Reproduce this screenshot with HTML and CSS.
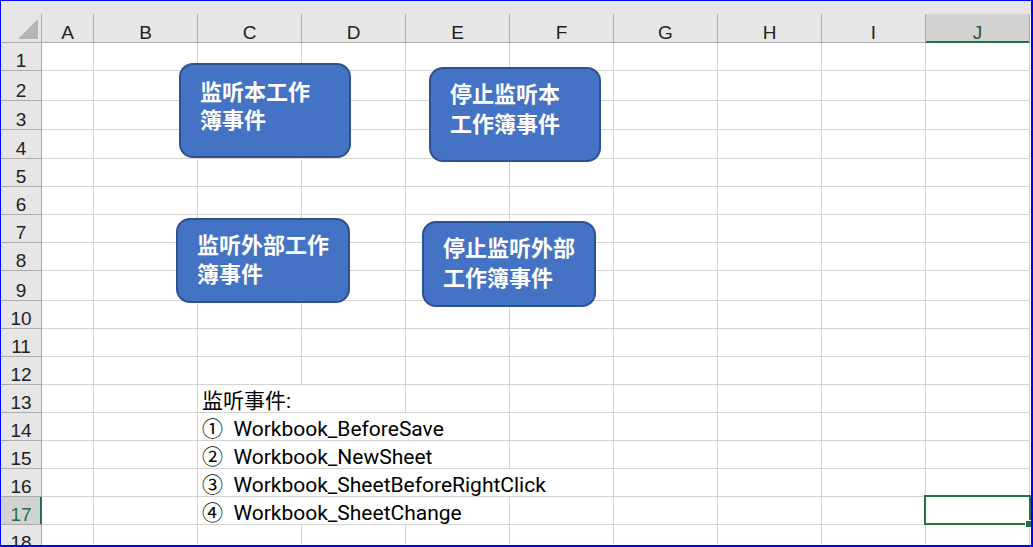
FILE: index.html
```html
<!DOCTYPE html>
<html lang="zh">
<head>
<meta charset="utf-8">
<title>Sheet</title>
<link rel="stylesheet" href="styles.css">
</head>
<body>
<div class="frame">
  <div class="sheet">
    <div class="strip"></div>
    <div class="grid">
      <div class="corner"><svg class="tri" width="20" height="20" viewBox="0 0 20 20"><polygon points="20,0 20,20 0,20" fill="#b4b4b4"/></svg></div>
      <div class="ch">A</div><div class="ch">B</div><div class="ch">C</div><div class="ch">D</div><div class="ch">E</div><div class="ch">F</div><div class="ch">G</div><div class="ch">H</div><div class="ch">I</div><div class="ch sel">J</div>

      <div class="rh">1</div><div class="c"></div><div class="c"></div><div class="c"></div><div class="c"></div><div class="c"></div><div class="c"></div><div class="c"></div><div class="c"></div><div class="c"></div><div class="c"></div>
      <div class="rh">2</div><div class="c"></div><div class="c"></div><div class="c"></div><div class="c"></div><div class="c"></div><div class="c"></div><div class="c"></div><div class="c"></div><div class="c"></div><div class="c"></div>
      <div class="rh">3</div><div class="c"></div><div class="c"></div><div class="c"></div><div class="c"></div><div class="c"></div><div class="c"></div><div class="c"></div><div class="c"></div><div class="c"></div><div class="c"></div>
      <div class="rh">4</div><div class="c"></div><div class="c"></div><div class="c"></div><div class="c"></div><div class="c"></div><div class="c"></div><div class="c"></div><div class="c"></div><div class="c"></div><div class="c"></div>
      <div class="rh">5</div><div class="c"></div><div class="c"></div><div class="c"></div><div class="c"></div><div class="c"></div><div class="c"></div><div class="c"></div><div class="c"></div><div class="c"></div><div class="c"></div>
      <div class="rh">6</div><div class="c"></div><div class="c"></div><div class="c"></div><div class="c"></div><div class="c"></div><div class="c"></div><div class="c"></div><div class="c"></div><div class="c"></div><div class="c"></div>
      <div class="rh">7</div><div class="c"></div><div class="c"></div><div class="c"></div><div class="c"></div><div class="c"></div><div class="c"></div><div class="c"></div><div class="c"></div><div class="c"></div><div class="c"></div>
      <div class="rh">8</div><div class="c"></div><div class="c"></div><div class="c"></div><div class="c"></div><div class="c"></div><div class="c"></div><div class="c"></div><div class="c"></div><div class="c"></div><div class="c"></div>
      <div class="rh">9</div><div class="c"></div><div class="c"></div><div class="c"></div><div class="c"></div><div class="c"></div><div class="c"></div><div class="c"></div><div class="c"></div><div class="c"></div><div class="c"></div>
      <div class="rh">10</div><div class="c"></div><div class="c"></div><div class="c"></div><div class="c"></div><div class="c"></div><div class="c"></div><div class="c"></div><div class="c"></div><div class="c"></div><div class="c"></div>
      <div class="rh">11</div><div class="c"></div><div class="c"></div><div class="c"></div><div class="c"></div><div class="c"></div><div class="c"></div><div class="c"></div><div class="c"></div><div class="c"></div><div class="c"></div>
      <div class="rh">12</div><div class="c"></div><div class="c"></div><div class="c"></div><div class="c"></div><div class="c"></div><div class="c"></div><div class="c"></div><div class="c"></div><div class="c"></div><div class="c"></div>

      <div class="rh">13</div><div class="c"></div><div class="c"></div><div class="c t span2">监听事件:</div><div class="c"></div><div class="c"></div><div class="c"></div><div class="c"></div><div class="c"></div><div class="c"></div>
      <div class="rh">14</div><div class="c"></div><div class="c"></div><div class="c t span3">①  Workbook_BeforeSave</div><div class="c"></div><div class="c"></div><div class="c"></div><div class="c"></div><div class="c"></div>
      <div class="rh">15</div><div class="c"></div><div class="c"></div><div class="c t span3">②  Workbook_NewSheet</div><div class="c"></div><div class="c"></div><div class="c"></div><div class="c"></div><div class="c"></div>
      <div class="rh">16</div><div class="c"></div><div class="c"></div><div class="c t span4">③  Workbook_SheetBeforeRightClick</div><div class="c"></div><div class="c"></div><div class="c"></div><div class="c"></div>
      <div class="rh sel">17</div><div class="c"></div><div class="c"></div><div class="c t span3">④  Workbook_SheetChange</div><div class="c"></div><div class="c"></div><div class="c"></div><div class="c"></div><div class="c"></div>
      <div class="rh">18</div><div class="c"></div><div class="c"></div><div class="c"></div><div class="c"></div><div class="c"></div><div class="c"></div><div class="c"></div><div class="c"></div><div class="c"></div><div class="c"></div>
    </div>

    <div class="shape s1">监听本工作<br>簿事件</div>
    <div class="shape s2">停止监听本<br>工作簿事件</div>
    <div class="shape s3">监听外部工作<br>簿事件</div>
    <div class="shape s4">停止监听外部<br>工作簿事件</div>

    <div class="selection"><span class="handle"></span></div>
  </div>
</div>
</body>
</html>
```

FILE: styles.css
```css
html, body {
  margin: 0;
  padding: 0;
  background: #ffffff;
}

.frame {
  width: 1033px;
  height: 547px;
  box-sizing: border-box;
  border-style: solid;
  border-color: #0000ff;
  border-width: 1px 2px 2px 1px;
  overflow: hidden;
  background: #ffffff;
}

.sheet {
  position: relative;
  width: 100%;
  height: 100%;
  overflow: hidden;
}

.strip {
  height: 13px;
  background: #e6e6e6;
}

.grid {
  display: grid;
  grid-template-columns: 41px 52px repeat(9, 104px);
  grid-template-rows: 29px 28px 30px 29px 29px 28px 28px 28px 28px 30px 28px 28px 28px 28px 28px 28px 28px 28px 28px;
}

.corner {
  background: #e6e6e6;
  border-right: 1px solid #ababab;
  border-bottom: 1px solid #ababab;
  box-sizing: border-box;
  display: flex;
  justify-content: flex-end;
  align-items: flex-end;
  padding: 0 3px 3px 0;
}

.tri {
  display: block;
}

.ch,
.rh {
  background: #e6e6e6;
  box-sizing: border-box;
  display: flex;
  justify-content: center;
  align-items: flex-end;
  font-family: "Liberation Sans", Arial, sans-serif;
  font-size: 19px;
  line-height: 19px;
  color: #222222;
}

.ch {
  border-right: 1px solid #ababab;
  border-bottom: 1px solid #ababab;
}

.rh {
  border-right: 1px solid #ababab;
  border-bottom: 1px solid #ababab;
}

.ch.sel {
  background: #d2d2d2;
  color: #1e5a38;
  border-bottom-color: #217346;
  box-shadow: inset 0 -1px 0 #217346;
}

.rh.sel {
  background: #d2d2d2;
  color: #217346;
  border-right-color: #217346;
  box-shadow: inset -1px 0 0 #217346;
}

.c {
  box-sizing: border-box;
  border-right: 1px solid #d4d4d4;
  border-bottom: 1px solid #d4d4d4;
}

.t {
  display: flex;
  align-items: flex-end;
  padding: 0 0 1px 4px;
  white-space: pre;
  font-family: Roboto, "Noto Sans CJK SC", sans-serif;
  font-size: 21px;
  line-height: 20px;
  color: #000000;
}

.span2 { grid-column: span 2; }
.span3 { grid-column: span 3; }
.span4 { grid-column: span 4; }

.shape {
  position: absolute;
  box-sizing: border-box;
  background: #4472c4;
  border: 2px solid #2f528f;
  border-radius: 14px;
  color: #ffffff;
  font-family: "Noto Sans CJK SC", sans-serif;
  font-weight: 700;
  font-size: 22px;
  line-height: 30px;
  padding: 8px 0 0 19px;
  white-space: nowrap;
}

.s1 {
  left: 178px;
  top: 62px;
  width: 172px;
  height: 95px;
  line-height: 28px;
  padding-top: 11px;
}

.s2 {
  left: 428px;
  top: 66px;
  width: 172px;
  height: 95px;
  padding-top: 8px;
}

.s3 {
  left: 175px;
  top: 217px;
  width: 174px;
  height: 85px;
  line-height: 29px;
  padding-top: 9px;
}

.s4 {
  left: 421px;
  top: 220px;
  width: 174px;
  height: 86px;
  padding-top: 8px;
}

.selection {
  position: absolute;
  left: 923px;
  top: 494px;
  width: 107px;
  height: 30px;
  box-sizing: border-box;
  border: 2px solid #217346;
}

.handle {
  position: absolute;
  left: 99px;
  top: 23px;
  width: 8px;
  height: 8px;
  box-sizing: border-box;
  background: #217346;
  border: 1px solid #ffffff;
}
```
